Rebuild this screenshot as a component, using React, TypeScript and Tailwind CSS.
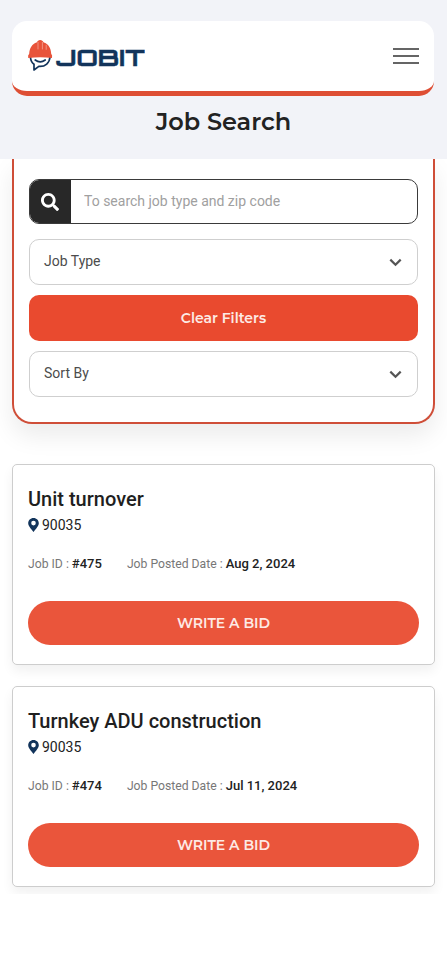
import { useState } from "react";
import { FaSearch } from "react-icons/fa";

const jobs = [
  { id: 475, title: "Unit turnover", zip: "90035", posted: "Aug 2, 2024" },
  { id: 474, title: "Turnkey ADU construction", zip: "90035", posted: "Jul 11, 2024" }
];

type Job = (typeof jobs)[number];

const Logo = () => (
  <svg width="118" height="34" viewBox="0 0 118 34" aria-label="Jobit">
    {/* Speech bubble face */}
    <path d="M3.4 18 C3.7 21.6 5 23.8 7 25.2 V31 L11.8 27.4 C18.4 28 22.6 23.6 23 18" fill="#fff" stroke="#12345b" strokeWidth="1.7" strokeLinejoin="round" />
    <path d="M8.2 21 Q13.2 24.8 18.2 21" fill="none" stroke="#12345b" strokeWidth="1.7" strokeLinecap="round" />
    {/* Helmet */}
    <path d="M2.2 14.8 C2.4 8.8 5.4 4.6 9.6 3.4 L10.8 2 Q13.2 0.2 15.6 2 L16.8 3.4 C21.2 4.6 24 8.8 24.2 14.8 Q25.6 16.2 25 19 Q13.3 17.4 1.2 19 Q0.6 16.2 2.2 14.8 Z" fill="#e8533a" />
    <path d="M11 3.4 V10 M15.4 3.4 V10 M19.2 6.2 V10.4" stroke="#f4a294" strokeWidth="0.8" strokeLinecap="round" />
    <text
      x="29.3"
      y="27"
      textLength="88.5"
      lengthAdjust="spacingAndGlyphs"
      fill="#12345b"
      stroke="#12345b"
      strokeWidth="0.4"
      className="font-['Orbitron','Inter',sans-serif] text-[23px] font-bold"
    >
      JOBIT
    </text>
  </svg>
);

const PinIcon = () => (
  <svg width="11" height="14" viewBox="0 0 11 14" fill="#12345b">
    <path
      fillRule="evenodd"
      d="M5.5 0 C2.4 0 0.2 2.3 0.2 5.2 C0.2 8 2.8 10.4 5.5 14 C8.2 10.4 10.8 8 10.8 5.2 C10.8 2.3 8.6 0 5.5 0 Z M5.5 2.8 A2.3 2.3 0 1 1 5.5 7.4 A2.3 2.3 0 1 1 5.5 2.8 Z"
    />
  </svg>
);

const FilterSelect = ({ label }: { label: string }) => (
  <button className="flex h-[46px] w-full items-center justify-between rounded-[10px] border border-[#cfcfcf] bg-white pl-3.5 pr-[15px] text-[14px] text-[#4c4c4c]">
    <span className="pb-0.5">{label}</span>
    <svg width="13" height="9" viewBox="0 0 13 9" fill="none">
      <path d="M1.3 1.6 L6.5 6.8 L11.7 1.6" stroke="#555" strokeWidth="2.2" />
    </svg>
  </button>
);

const JobCard = ({ job }: { job: Job }) => (
  <article className="h-[201px] rounded-[5px] border border-[#cdcdcd] bg-white px-[15px] pt-[22px] shadow-[0_6px_12px_rgba(0,0,0,0.06)]">
    <h2 className="text-[20px] font-medium leading-6 text-[#1f1f1f]">{job.title}</h2>
    <div className="mt-1 flex h-5 items-center gap-[3px] text-[14px] text-[#222]">
      <PinIcon />
      <span>{job.zip}</span>
    </div>
    <div className="mt-[19px] flex h-5 items-center gap-[25px] text-[12.2px] text-[#777]">
      <p>
        Job ID : <span className="text-[13px] font-medium text-[#222]">#{job.id}</span>
      </p>
      <p>
        Job Posted Date : <span className="text-[13px] font-medium text-[#222]">{job.posted}</span>
      </p>
    </div>
    <button className="mt-[27px] h-11 w-full rounded-full bg-[#ea553b] font-['Montserrat','Inter',sans-serif] text-[14px] font-semibold text-[#fdeae5]">
      WRITE A BID
    </button>
  </article>
);

const App = () => {
  const [query, setQuery] = useState("");

  return (
    <div className="min-h-screen bg-white font-['Roboto',sans-serif]">
      {/* Header */}
      <header className="relative z-10 h-[159px] bg-[#f2f3f8] px-[12px] pt-[21px]">
        <nav className="mr-px flex h-[75px] items-center justify-between rounded-[15px] border-b-[5px] border-[#de4e34] bg-white px-[15px]">
          <Logo />
          <button aria-label="Menu">
            <svg width="26" height="16" viewBox="0 0 26 16" stroke="#333" strokeWidth="1.4">
              <path d="M0 1 H26 M0 8 H26 M0 15 H26" />
            </svg>
          </button>
        </nav>
        <h1 className="mt-[11px] text-center font-['Montserrat','Inter',sans-serif] text-[24px] font-semibold leading-[30px] text-[#222]">
          Job Search
        </h1>
      </header>

      <main className="h-[735px] overflow-hidden px-3">
        {/* Filters */}
        <section className="flex h-[265px] flex-col gap-2.5 rounded-b-[20px] border-2 border-t-0 border-[#cf4e38] bg-white px-[15px] pt-[20px] shadow-[0_12px_24px_rgba(0,0,0,0.08)]">
          <div className="mb-[5px] flex h-[45px] shrink-0 overflow-hidden rounded-[10px] border border-[#3a3a3a]">
            <div className="flex w-[41px] shrink-0 items-center justify-center bg-[#282828] pr-0.5">
              <FaSearch className="h-[18px] w-[18px] text-white" />
            </div>
            <input
              value={query}
              onChange={(e) => setQuery(e.target.value)}
              placeholder="To search job type and zip code"
              className="min-w-0 flex-1 px-[13px] text-[14px] outline-none placeholder:text-[#a0a0a0]"
            />
          </div>
          <FilterSelect label="Job Type" />
          <button
            onClick={() => setQuery("")}
            className="h-[46px] shrink-0 rounded-[10px] bg-[#e94a2f] font-['Montserrat','Inter',sans-serif] text-[14px] font-semibold text-[#fdeae5]"
          >
            Clear Filters
          </button>
          <FilterSelect label="Sort By" />
        </section>

        {/* Job list */}
        <section className="mt-10 flex flex-col gap-[21px]">
          {jobs.map((job) => (
            <JobCard key={job.id} job={job} />
          ))}
        </section>
      </main>
    </div>
  );
};

export default App;
